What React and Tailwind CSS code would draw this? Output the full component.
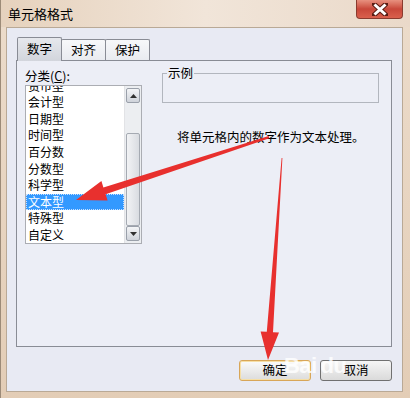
import React from "react";

const CJK = { fontFamily: "'Noto Sans CJK SC', 'Noto Sans', sans-serif" };

const items = ["货币型", "会计型", "日期型", "时间型", "百分数", "分数型", "科学型", "文本型", "特殊型", "自定义"];

function ScrollBtn({ up }) {
  return (
    <div className="h-[15px] mx-[1px] rounded-[2px] border border-[#9aa0aa] bg-gradient-to-b from-[#f4f5f7] to-[#cfd3da] flex items-center justify-center">
      <svg width="7" height="4" viewBox="0 0 7 4">
        <path d={up ? "M0 4 L3.5 0 L7 4 Z" : "M0 0 L3.5 4 L7 0 Z"} fill="#303030" />
      </svg>
    </div>
  );
}

function ListBox() {
  return (
    <div className="w-[117px] h-[159px] border border-[#abadb3] bg-white flex overflow-hidden">
      <div className="flex-1 overflow-hidden">
        <div className="-mt-[8.3px]">
          {items.map((t) => (
            <div
              key={t}
              className={
                "h-[16.6px] leading-[16.6px] pl-[2px] text-[12px] " +
                (t === "文本型" ? "bg-[#3399ff] text-white outline-1 outline-dotted outline-[#c8e0ff] -outline-offset-1" : "text-black")
              }
            >
              {t}
            </div>
          ))}
        </div>
      </div>
      <div className="w-[17px] bg-[#eceef1] border-l border-[#e2e3e6] flex flex-col py-[2px]">
        <ScrollBtn up />
        <div className="flex-1 flex flex-col px-[1px]">
          <div className="h-[30px]" />
          <div className="h-[93px] rounded-[2px] border border-[#a5aab2] bg-gradient-to-r from-[#f2f3f5] to-[#d9dce1]" />
        </div>
        <ScrollBtn />
      </div>
    </div>
  );
}

function Tab({ label, active }) {
  return (
    <div
      className={
        "w-[45px] flex items-center justify-center text-[12.5px] border border-b-0 border-[#898c95] rounded-t-[2px] " +
        (active
          ? "h-[24px] bg-gradient-to-b from-[#e6e8ed] to-[#d2d5dc] relative z-10 -mb-[1px] pb-[1px]"
          : "h-[21px] bg-gradient-to-b from-[#f7f8fa] to-[#e9ebf0] -ml-[1px]")
      }
    >
      {label}
    </div>
  );
}

function Arrows() {
  return (
    <svg className="absolute inset-0 pointer-events-none" width="410" height="398" viewBox="0 0 410 398">
      <polygon
        points="268.3,138.2 104.6,194.2 106.6,200.6 75,200 100.4,181 102.4,187.4 267.7,136"
        fill="#e8302e"
      />
      <polygon
        points="281.4,158 272,332.2 278,332.6 267,360 259.6,331.4 265.8,331.8 280.6,158"
        fill="#e8302e"
      />
    </svg>
  );
}

export default function App() {
  return (
    <div className="relative w-[410px] h-[398px] overflow-hidden bg-gradient-to-b from-[#ecdccb] to-[#e3cdb6] border-l border-[#9c8b78] flex flex-col" style={CJK}>
      {/* Title bar */}
      <div className="h-[27px] flex items-start justify-between bg-gradient-to-r from-[#e6d2bd] via-[#f1e5d9] to-[#ead9c9]">
        <span className="mt-[6px] ml-[7px] text-[13px] text-black leading-[16px]">单元格格式</span>
        <div className="mr-[7px] w-[47px] h-[19px] rounded-b-[4px] border border-t-0 border-[#8a3b2f] bg-gradient-to-b from-[#e7907f] via-[#c8473a] to-[#d9604d] flex items-center justify-center">
          <svg width="16" height="13" viewBox="0 0 16 13">
            <path d="M2 1 L14 12 M14 1 L2 12" stroke="#5a1d14" strokeWidth="5" strokeLinecap="square" />
            <path d="M2.5 1.5 L13.5 11.5 M13.5 1.5 L2.5 11.5" stroke="#ffffff" strokeWidth="3" />
          </svg>
        </div>
      </div>

      {/* Content */}
      <div className="ml-[5px] mr-[7px] mb-[6px] flex-1 border border-[#b9a996] bg-[#e8eaf3] pl-[9px] pr-[10px] pt-[9px] flex flex-col">
        <div className="flex items-end pl-[1px]">
          <Tab label="数字" active />
          <Tab label="对齐" />
          <Tab label="保护" />
        </div>

        <div className="h-[287px] border border-[#898c95] bg-[#eceef6] flex">
          {/* Left column */}
          <div className="pl-[8px] pt-[7px] flex flex-col">
            <span className="text-[12.5px] leading-[16px] mb-[1px]">
              分类(<span className="underline">C</span>):
            </span>
            <ListBox />
          </div>

          {/* Right column */}
          <div className="ml-[20px] pt-[12px] flex flex-col">
            <div className="relative w-[217px] h-[30px] border border-[#b2b6be]">
              <span className="absolute -top-[9px] left-[4px] px-[1px] bg-[#eceef6] text-[12.5px] leading-[16px]">示例</span>
            </div>
            <p className="mt-[26px] ml-[15px] text-[12.5px] leading-[16px] text-black">将单元格内的数字作为文本处理。</p>
          </div>
        </div>

        {/* Buttons */}
        <div className="flex justify-end gap-[9px] mt-[13px]">
          <button className="w-[72px] h-[21px] rounded-[3px] border border-[#d8a658] bg-gradient-to-b from-[#fbfbfb] to-[#dcdcdc] shadow-[inset_0_0_0_1px_#f6dfa6] text-[12.5px] leading-none">
            确定
          </button>
          <button className="w-[72px] h-[21px] rounded-[3px] border border-[#707070] bg-gradient-to-b from-[#f6f6f6] to-[#dadada] text-[12.5px] leading-none">
            取消
          </button>
        </div>
      </div>

      {/* Watermark */}
      <div className="absolute left-[283px] top-[355px] text-white/80 text-[22px] font-bold leading-none pointer-events-none tracking-tight" style={{ fontFamily: "'Liberation Sans', sans-serif" }}>
        Bai<span className="ml-[4px]">du</span>
      </div>

      <Arrows />
    </div>
  );
}
